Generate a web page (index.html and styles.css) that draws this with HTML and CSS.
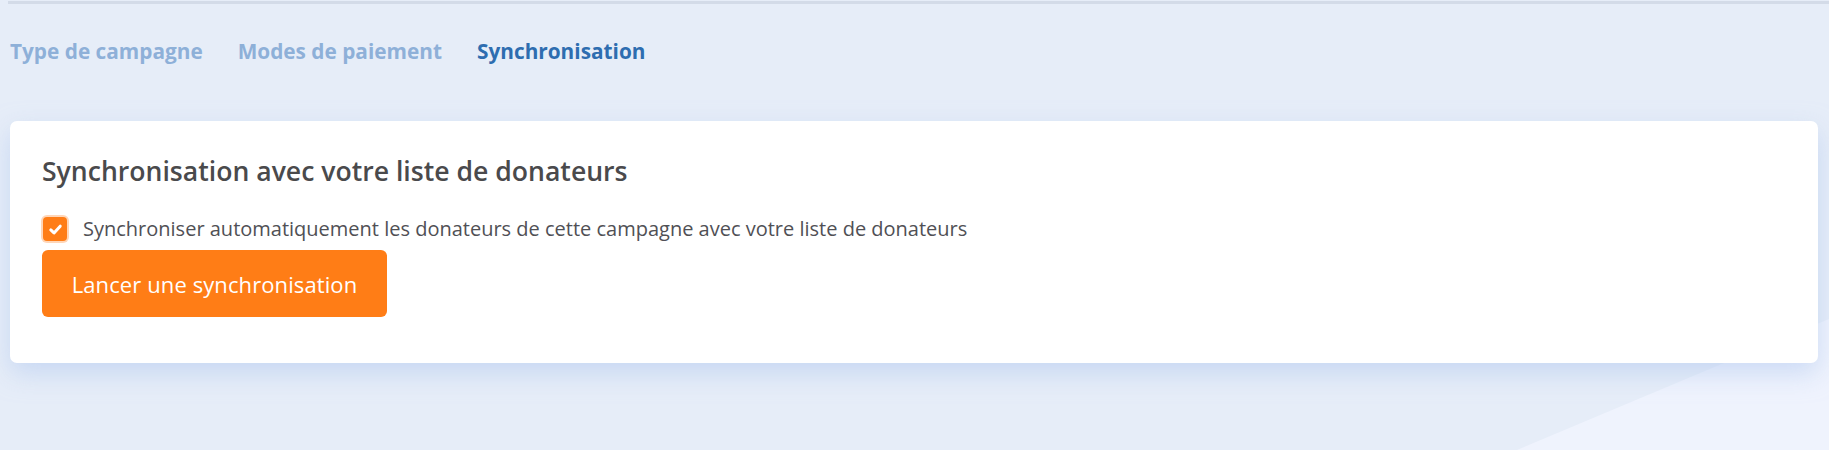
FILE: index.html
```html
<!DOCTYPE html>
<html lang="fr">

<head>
    <meta charset="UTF-8">
    <meta name="viewport" content="width=device-width, initial-scale=1.0">
    <title>Synchronisation</title>
    <link rel="stylesheet" href="styles.css">
</head>

<body>

    <div class="page">
        <div class="top-rule"></div>

        <nav class="tabs">
            <a href="#" class="tab">Type de campagne</a>
            <a href="#" class="tab">Modes de paiement</a>
            <a href="#" class="tab active">Synchronisation</a>
        </nav>

        <div class="card">
            <h2>Synchronisation avec votre liste de donateurs</h2>

            <label class="check-row">
                <input type="checkbox" checked>
                <span class="check-box">
                    <svg viewBox="0 0 14 14" width="15" height="15">
                        <path d="M2.6 7.4 L5.6 10.2 L11.4 3.9" fill="none" stroke="#fff" stroke-width="2.8" stroke-linecap="round" stroke-linejoin="round"/>
                    </svg>
                </span>
                Synchroniser automatiquement les donateurs de cette campagne avec votre liste de donateurs
            </label>

            <button class="btn-sync">Lancer une synchronisation</button>
        </div>
    </div>

</body>

</html>
```

FILE: styles.css
```css
html,
body {
    height: 100%;
}

body {
    font-family: "Open Sans", "Noto Sans", sans-serif;
    background-color: #e6edf8;
    margin: 0;
    padding: 0;
    overflow: hidden;
    position: relative;
}

/* lighter wedge in the bottom right corner */
body::before {
    content: "";
    position: absolute;
    right: 0;
    bottom: 0;
    width: 312px;
    height: 131px;
    background: #eff3fd;
    clip-path: polygon(100% 0, 100% 100%, 0 100%);
}

.page {
    position: relative;
    padding: 0 11px 0 10px;
}

.top-rule {
    height: 3px;
    background: #d3dbe8;
    margin: 1px -11px 0 -2px;
}

.tabs {
    display: flex;
    gap: 35px;
    padding-top: 33px;
    height: 117px;
    box-sizing: border-box;
}

.tab {
    font-size: 20.8px;
    font-weight: bold;
    color: #8eb0d8;
    text-decoration: none;
    line-height: 28px;
}

.tab.active {
    color: #2e6db0;
}

.card {
    background: white;
    border-radius: 7px;
    padding: 33px 32px 46px;
    box-shadow: 0px 10px 26px rgba(175, 198, 238, 0.55);
}

.card h2 {
    margin: 0 0 27px;
    font-size: 26.6px;
    font-weight: 600;
    color: #4a4a4c;
    line-height: 34px;
}

.check-row {
    display: flex;
    align-items: center;
    gap: 16px;
    font-size: 20px;
    color: #505055;
    line-height: 28px;
    cursor: pointer;
}

.check-row input {
    display: none;
}

.check-box {
    width: 24px;
    height: 24px;
    margin: 2px 0 2px 1px;
    border-radius: 4px;
    background: #ff7d16;
    box-shadow: 0 0 0 2px #ffd6b8;
    display: flex;
    align-items: center;
    justify-content: center;
}

.btn-sync {
    display: block;
    margin-top: 7px;
    background: #ff7d16;
    color: white;
    border: none;
    border-radius: 6px;
    width: 345px;
    height: 67px;
    font-family: "Open Sans", "Noto Sans", sans-serif;
    font-size: 22px;
    letter-spacing: 0.1px;
    cursor: pointer;
}
```
